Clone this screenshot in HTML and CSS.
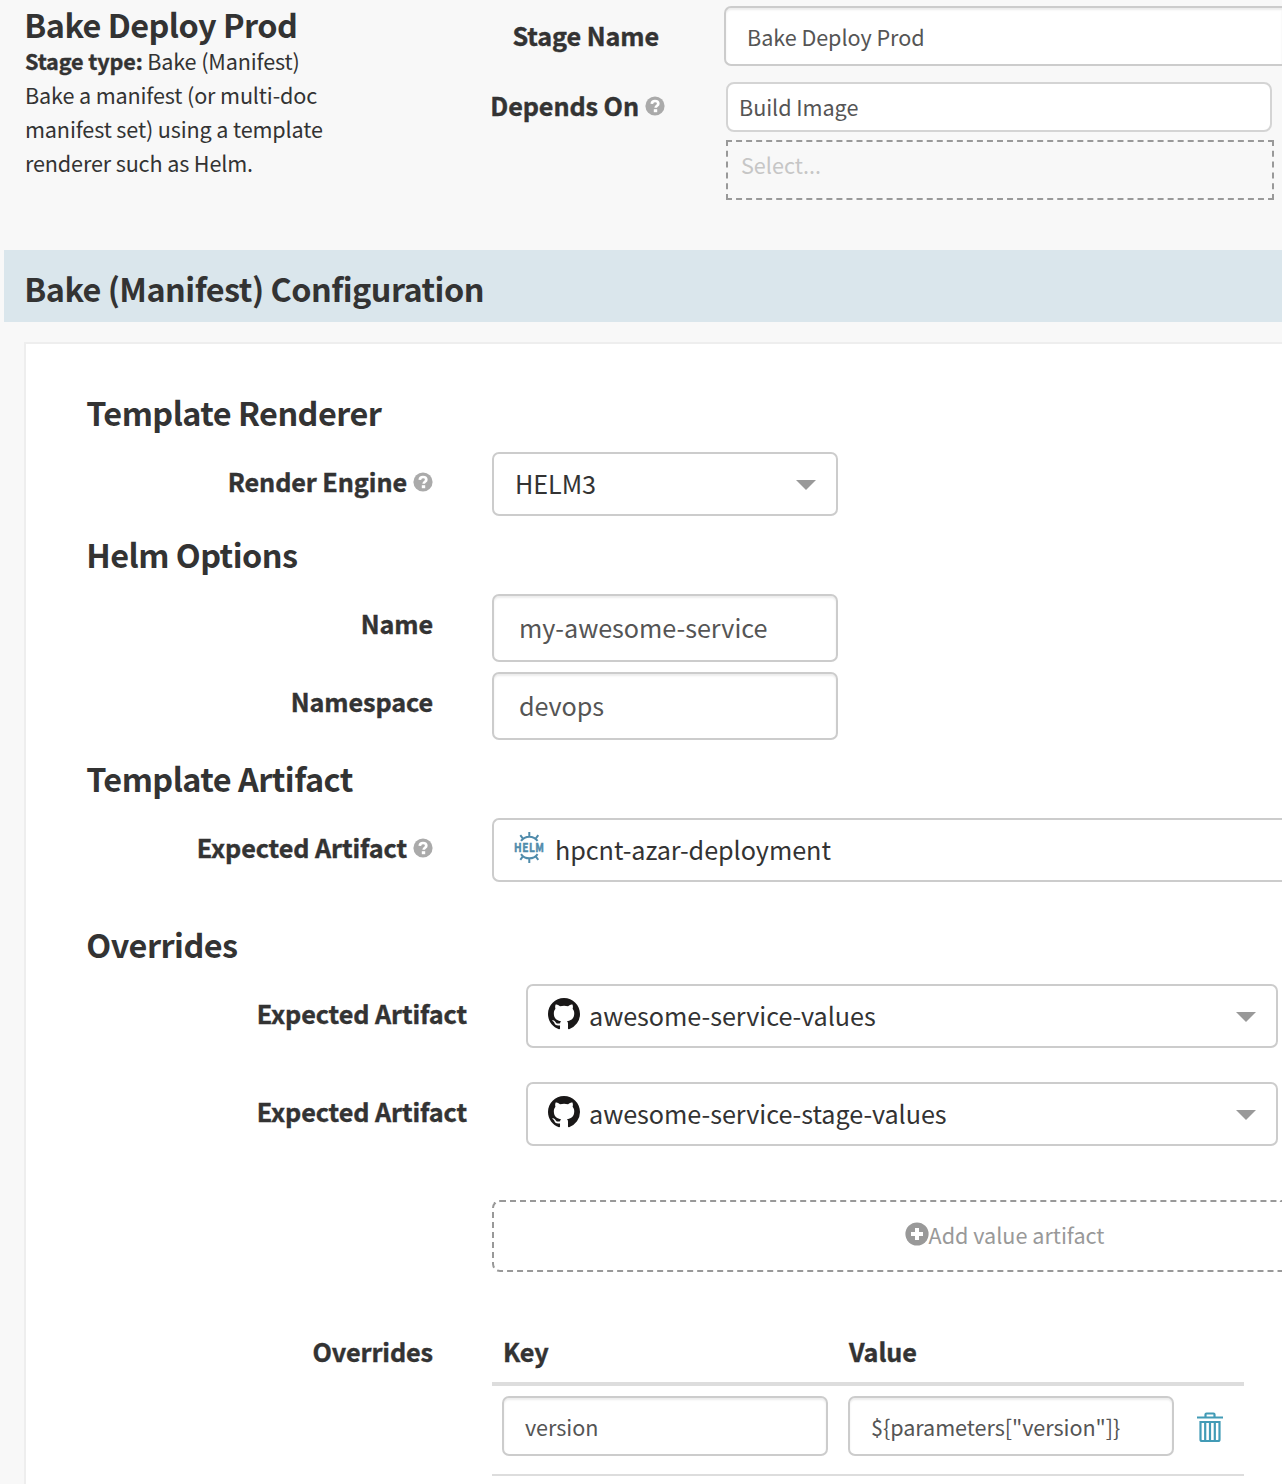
FILE: index.html
```html
<!DOCTYPE html>
<html lang="en">
<head>
<meta charset="utf-8">
<title>Bake Deploy Prod</title>
<link rel="stylesheet" href="styles.css">
</head>
<body>
<svg class="defs" width="0" height="0" aria-hidden="true">
  <symbol id="help" viewBox="0 0 20 20">
    <circle cx="10" cy="10" r="9.6" fill="#aaa"/>
    <path d="M6.8 7.9C6.9 5.9 8.2 5 10 5s3.3 1 3.3 2.7c0 2.1-2.6 2-2.6 4" fill="none" stroke="#fff" stroke-width="2.7"/>
    <rect x="8.8" y="13.2" width="3.4" height="3" fill="#fff"/>
  </symbol>
  <symbol id="github" viewBox="0 0 16 16">
    <path fill="#191717" d="M8 0C3.58 0 0 3.58 0 8c0 3.54 2.29 6.53 5.47 7.59.4.07.55-.17.55-.38 0-.19-.01-.82-.01-1.49-2.01.37-2.53-.49-2.69-.94-.09-.23-.48-.94-.82-1.13-.28-.15-.68-.52-.01-.53.63-.01 1.08.58 1.23.82.72 1.21 1.87.87 2.33.66.07-.52.28-.87.51-1.07-1.78-.2-3.64-.89-3.64-3.95 0-.87.31-1.59.82-2.15-.08-.2-.36-1.02.08-2.12 0 0 .67-.21 2.2.82.64-.18 1.32-.27 2-.27s1.36.09 2 .27c1.53-1.04 2.2-.82 2.2-.82.44 1.1.16 1.92.08 2.12.51.56.82 1.27.82 2.15 0 3.07-1.87 3.75-3.65 3.95.29.25.54.73.54 1.48 0 1.07-.01 1.93-.01 2.2 0 .21.15.46.55.38A8.01 8.01 0 0 0 16 8c0-4.42-3.58-8-8-8z"/>
  </symbol>
</svg>

<header class="stage">
  <div class="stage-info">
    <h1 class="heading">Bake Deploy Prod</h1>
    <p><strong>Stage type:</strong> Bake (Manifest)</p>
    <p class="description">Bake a manifest (or multi-doc manifest set) using a template renderer such as Helm.</p>
  </div>
  <div class="stage-form">
    <div class="label name-label">Stage Name</div>
    <div class="input cut">Bake Deploy Prod</div>
    <div class="label depends-label">Depends On<svg class="help"><use href="#help"/></svg></div>
    <div class="depends">
      <div class="dependency">Build Image</div>
      <div class="placeholder">Select...</div>
    </div>
  </div>
</header>

<h2 class="heading band">Bake (Manifest) Configuration</h2>

<main class="card">
  <h3 class="heading">Template Renderer</h3>
  <div class="row">
    <div class="label">Render Engine<svg class="help"><use href="#help"/></svg></div>
    <div class="select"><span>HELM3</span><i class="arrow"></i></div>
  </div>

  <h3 class="heading">Helm Options</h3>
  <div class="row">
    <div class="label">Name</div>
    <div class="input large">my-awesome-service</div>
  </div>
  <div class="row next">
    <div class="label">Namespace</div>
    <div class="input large">devops</div>
  </div>

  <h3 class="heading">Template Artifact</h3>
  <div class="row wide">
    <div class="label">Expected Artifact<svg class="help"><use href="#help"/></svg></div>
    <div class="select cut">
      <svg class="helm" viewBox="0 0 31 31">
        <g fill="none" stroke="#4f8bab" stroke-width="2">
          <path d="M7 8.900a10.200 10.200 0 0 1 16.600 0M7 22.100a10.200 10.200 0 0 0 16.600 0M15.300 0v5M6.300 3.200l2.800 3.600M24.300 3.200l-2.800 3.600M15.300 26v5M6.300 27.800l2.800-3.600M24.300 27.800l-2.800-3.600"/>
        </g>
        <text x="0" y="20" textLength="30.5" lengthAdjust="spacingAndGlyphs">HELM</text>
      </svg>
      <span>hpcnt-azar-deployment</span>
    </div>
  </div>

  <h3 class="heading spaced">Overrides</h3>
  <div class="row nested">
    <div class="label">Expected Artifact</div>
    <div class="select"><svg class="github"><use href="#github"/></svg><span>awesome-service-values</span><i class="arrow"></i></div>
  </div>
  <div class="row nested later">
    <div class="label">Expected Artifact</div>
    <div class="select"><svg class="github"><use href="#github"/></svg><span>awesome-service-stage-values</span><i class="arrow"></i></div>
  </div>

  <div class="add cut">
    <svg class="plus" viewBox="0 0 24 24"><circle cx="12" cy="12" r="11.6" fill="#999"/><path d="M12 6v12M6 12h12" stroke="#fff" stroke-width="4"/></svg><span>Add value artifact</span>
  </div>

  <div class="row overrides">
    <div class="label">Overrides</div>
    <div class="table">
      <div class="table-head"><div class="label">Key</div><div class="label">Value</div></div>
      <div class="table-row">
        <div class="input">version</div>
        <div class="input">${parameters["version"]}</div>
        <svg class="trash" viewBox="0 0 26 31" fill="none" stroke="#429bb6" stroke-width="2.2">
          <path d="M0 5.500h26M8.500 5V2.500q0-1 1-1h7q1 0 1 1V5M3.500 10h19v17.500q0 1.500-1.500 1.500h-16q-1.500 0-1.500-1.500zM8.200 10v19M13 10v19M17.800 10v19"/>
        </svg>
      </div>
    </div>
  </div>
</main>
</body>
</html>
```
FILE: styles.css
```css
* { box-sizing: border-box; }

body {
  margin: 0;
  width: 1282px;
  height: 1484px;
  overflow: hidden;
  background: #f8f8f8;
  color: #333;
  font: 21.6px/34px "Noto Sans CJK SC", "Noto Sans", sans-serif;
}

h1, h2, h3, p { margin: 0; }
.defs { display: block; }

.heading {
  font-size: 32.4px;
  font-weight: 700;
  line-height: 40px;
  letter-spacing: -.53px;
  text-indent: -.7px;
  white-space: nowrap;
}

.label {
  font-size: 25.2px;
  font-weight: 700;
  line-height: 40px;
  letter-spacing: -.08px;
  text-align: right;
  white-space: nowrap;
  -webkit-text-stroke: .4px #333;
}

.help {
  width: 20px;
  height: 20px;
  margin-left: 6px;
  vertical-align: 0;
}

.stage {
  display: flex;
  height: 250px;
}

.stage-info {
  flex: none;
  width: 365px;
  padding: 4px 0 0 25px;
  letter-spacing: -.14px;
}

.stage-info strong { -webkit-text-stroke: .4px #333; }

.description { width: 310px; }

.stage-form {
  display: grid;
  grid-template-columns: 300px 558px;
  grid-template-rows: 60px 118px;
  row-gap: 16px;
  column-gap: 59px;
  align-content: start;
  padding-top: 6px;
}

.name-label { padding: 9px 6px 0 0; }
.depends-label { padding-top: 3px; }

.input,
.select,
.dependency {
  display: flex;
  align-items: center;
  border: 2px solid #ccc;
  border-radius: 7px;
  background: #fff;
  white-space: nowrap;
}

.input {
  height: 60px;
  padding: 2px 0 0 21px;
  color: #555;
  letter-spacing: -.05px;
  box-shadow: inset 0 2px 2px rgba(0, 0, 0, .075);
}

.depends { padding-left: 2px; }

.dependency {
  width: 546px;
  height: 50px;
  padding-left: 11px;
  border-color: #d4d4d4;
  border-radius: 8px;
  color: #555;
  letter-spacing: -.05px;
}

.placeholder {
  width: 548px;
  height: 60px;
  margin-top: 8px;
  padding: 6px 0 0 13px;
  border: 2px dashed #999;
  color: #c6c6c6;
}

.band {
  height: 72px;
  margin-left: 4px;
  padding: 18px 0 0 21px;
  background: #dae6ec;
}

.card {
  height: 1142px;
  margin: 20px 0 0 24px;
  padding-top: 48px;
  border: solid #eee;
  border-width: 2px 0 0 2px;
  background: #fff;
}

.card > .heading {
  margin: 0 0 20px 61px;
}

.row + .heading { margin-top: 18px; }
.row + .spaced { margin-top: 42px; }

.row {
  display: grid;
  grid-template-columns: 407px 346px;
  column-gap: 59px;
}

.row > .label { padding-top: 9px; }
.next { margin-top: 10px; }
.wide { grid-template-columns: 407px 790px; }
.nested { grid-template-columns: 441px 752px; }
.later { margin-top: 34px; }

.large {
  height: 68px;
  padding: 0 0 2px 25px;
  font-size: 25.2px;
}

.select {
  height: 64px;
  padding: 0 20px 2px 21px;
  font-size: 25.2px;
  letter-spacing: -.05px;
}

.arrow {
  margin: 4px 0 0 auto;
  border: 10px solid transparent;
  border-top-color: #999;
  border-bottom: 0;
}

.helm {
  width: 31px;
  height: 31px;
  margin: -3px 10px 0 -1px;
  overflow: visible;
}

.helm text {
  fill: #4f8bab;
  stroke: #4f8bab;
  stroke-width: .5px;
  font-size: 11.8px;
  font-weight: 700;
  letter-spacing: .6px;
}

.github {
  width: 32px;
  height: 32px;
  margin: -2px 9px 0 -1px;
}

.add {
  display: flex;
  align-items: center;
  justify-content: center;
  width: 790px;
  height: 72px;
  margin: 54px 0 0 466px;
  padding: 0 0 3px 233px;
  border: 2px dashed #999;
  border-radius: 8px;
  color: #999;
}

/* Fields that continue past the edge of the pane */
.cut {
  border-right: 0;
  border-top-right-radius: 0;
  border-bottom-right-radius: 0;
}

.plus {
  width: 24px;
  height: 24px;
  margin-top: -2px;
}

.overrides {
  grid-template-columns: 407px 752px;
  margin-top: 50px;
}

.table-head {
  display: grid;
  grid-template-columns: 346px 346px;
  height: 64px;
  padding: 9px 0 0 11px;
  border-bottom: 4px solid #ddd;
}

.table-head .label { text-align: left; }

.table-row {
  display: grid;
  grid-template-columns: 326px 326px 26px;
  column-gap: 20px;
  height: 90px;
  padding: 10px 0 0 10px;
  border-bottom: 2px solid #ddd;
}

.trash {
  width: 26px;
  height: 31px;
  margin: 16px 0 0 3px;
}
```
